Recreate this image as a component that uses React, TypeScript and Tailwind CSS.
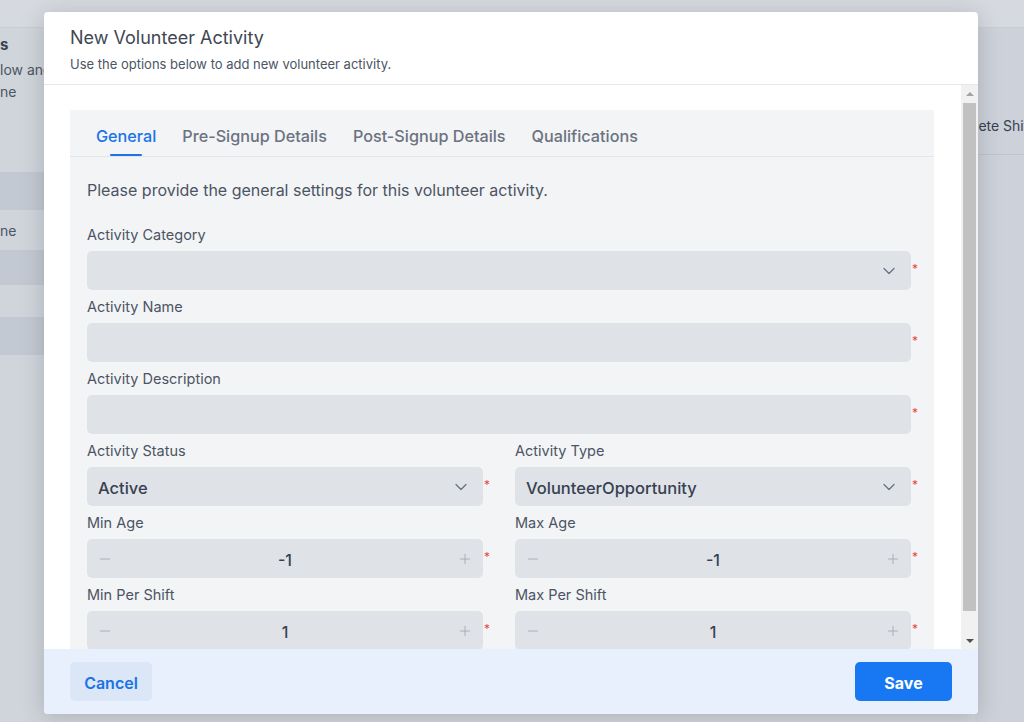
import { ChevronDown, Minus, Plus } from "lucide-react";

function Required() {
  return (
    <span className="w-[23px] shrink-0 pl-[1px] text-[12px] leading-none text-[#ef4444] -mt-[3px]">
      *
    </span>
  );
}

function Field({ label, children }: { label: string; children: React.ReactNode }) {
  return (
    <div className="flex flex-col">
      <div className="h-[20px] pt-[1px] text-[14.5px] leading-[20px] text-[#4b5563]">{label}</div>
      <div className="mt-[7px] mb-[6px] flex items-center">
        {children}
        <Required />
      </div>
    </div>
  );
}

function Select({ value }: { value?: string }) {
  return (
    <div className="flex h-[39px] flex-1 items-center justify-between rounded-[5px] bg-[#dfe3e8] pl-[11px] pr-[12px]">
      <span className="pt-[3px] text-[16.5px] font-medium text-[#374151]">{value}</span>
      <ChevronDown size={20} strokeWidth={1.5} className="text-[#6b7280]" />
    </div>
  );
}

function TextBox() {
  return <div className="h-[39px] flex-1 rounded-[5px] bg-[#dfe3e8]" />;
}

function NumberBox({ value }: { value: string }) {
  return (
    <div className="flex h-[39px] flex-1 items-center justify-between rounded-[5px] bg-[#dfe3e8] px-[10px]">
      <Minus size={16} strokeWidth={1.2} className="text-[#9ca3af]" />
      <span className="pt-[3px] text-[16px] font-medium text-[#374151]">{value}</span>
      <Plus size={16} strokeWidth={1.2} className="text-[#9ca3af]" />
    </div>
  );
}

const tabs = ["General", "Pre-Signup Details", "Post-Signup Details", "Qualifications"];

export default function App() {
  return (
    <div className="relative h-[722px] w-[1024px] overflow-hidden bg-[#d3d7de] font-['Inter',sans-serif]">
      {/* page behind the dialog */}
      <div className="flex h-full flex-col">
        <div className="h-[28px] bg-[#d6dae0] border-b border-[#c9ced6]" />
        <div className="flex flex-1">
          <div className="w-[60px] shrink-0 bg-[#d0d5dc]">
            <div className="mt-[6px] text-[15px] font-bold leading-[22px] text-[#374151]">s</div>
            <div className="mt-[3px] whitespace-nowrap text-[14px] leading-[22px] text-[#4b5563]">low and</div>
            <div className="text-[14px] leading-[22px] text-[#4b5563]">ne</div>
            <div className="mt-[69px] h-[38px] bg-[#c3c9d2]" />
            <div className="flex h-[40px] items-center text-[14px] text-[#4b5563]">ne</div>
            <div className="h-[35px] bg-[#c3c9d2]" />
            <div className="h-[32px]" />
            <div className="h-[38px] bg-[#c3c9d2]" />
          </div>
          <div className="flex-1" />
          <div className="w-[49px] shrink-0 overflow-hidden bg-[#cdd2da]">
            <div className="mt-[84px] h-[43px] whitespace-nowrap border-b border-[#bfc5ce] pt-[3px] text-[14px] text-[#374151]">
              lete Shifts
            </div>
          </div>
        </div>
      </div>

      {/* dialog */}
      <div className="absolute inset-0 pl-[44px] pt-[12px]">
        <div className="flex h-[702px] w-[934px] flex-col overflow-hidden rounded-[4px] bg-white shadow-[0_4px_24px_rgba(0,0,0,0.18)]">
          <div className="h-[73px] shrink-0 border-b border-[#e5e7eb] px-[26px] pt-[13px]">
            <div className="text-[18px] leading-[26px] text-[#3f4754]">New Volunteer Activity</div>
            <div className="mt-[4px] text-[13px] leading-[18px] text-[#4b5563]">
              Use the options below to add new volunteer activity.
            </div>
          </div>

          <div className="flex min-h-0 flex-1">
            <div className="flex-1 overflow-hidden pl-[26px] pr-[26px] pt-[25px]">
              <div className="mr-[1px] h-full bg-[#f3f4f6]">
                <div className="flex h-[47px] items-center gap-[26px] border-b border-[#e2e5ea] pl-[26px] pt-[7px]">
                  {tabs.map((t, i) => (
                    <div
                      key={t}
                      className={`relative flex h-full items-center text-[16.2px] font-medium ${
                        i === 0 ? "text-[#1a73e8]" : "text-[#6b7280]"
                      }`}
                    >
                      {t}
                      {i === 0 && (
                        <span className="absolute bottom-0 left-1/2 h-[2px] w-[32px] -translate-x-1/2 rounded-full bg-[#1a73e8]" />
                      )}
                    </div>
                  ))}
                </div>

                <div className="pl-[17px] pt-[21px]">
                  <div className="mb-[22px] text-[16px] leading-[24px] text-[#4b5563]">
                    Please provide the general settings for this volunteer activity.
                  </div>
                  <Field label="Activity Category">
                    <Select />
                  </Field>
                  <Field label="Activity Name">
                    <TextBox />
                  </Field>
                  <Field label="Activity Description">
                    <TextBox />
                  </Field>
                  <div className="grid grid-cols-2 gap-x-[9px]">
                    <Field label="Activity Status">
                      <Select value="Active" />
                    </Field>
                    <Field label="Activity Type">
                      <Select value="VolunteerOpportunity" />
                    </Field>
                    <Field label="Min Age">
                      <NumberBox value="-1" />
                    </Field>
                    <Field label="Max Age">
                      <NumberBox value="-1" />
                    </Field>
                    <Field label="Min Per Shift">
                      <NumberBox value="1" />
                    </Field>
                    <Field label="Max Per Shift">
                      <NumberBox value="1" />
                    </Field>
                  </div>
                </div>
              </div>
            </div>

            {/* scrollbar */}
            <div className="flex w-[17px] shrink-0 flex-col items-center bg-[#f1f1f1]">
              <div className="flex h-[17px] items-center justify-center">
                <span className="h-0 w-0 border-x-[4px] border-b-[4px] border-x-transparent border-b-[#a3a3a3]" />
              </div>
              <div className="mt-[1px] h-[508px] w-[13px] bg-[#c1c1c1]" />
              <div className="flex-1" />
              <div className="flex h-[17px] items-center justify-center">
                <span className="h-0 w-0 border-x-[4px] border-t-[4px] border-x-transparent border-t-[#505050]" />
              </div>
            </div>
          </div>

          <div className="flex h-[65px] shrink-0 items-center justify-between bg-[#e7f0fc] px-[26px]">
            <button className="h-[39px] w-[82px] rounded-[5px] bg-[#dbe7f6] pt-[2px] text-[16px] font-semibold text-[#1a73e8]">
              Cancel
            </button>
            <button className="h-[39px] w-[97px] rounded-[5px] bg-[#1877f2] pt-[2px] text-[16px] font-bold text-white">
              Save
            </button>
          </div>
        </div>
      </div>
    </div>
  );
}
